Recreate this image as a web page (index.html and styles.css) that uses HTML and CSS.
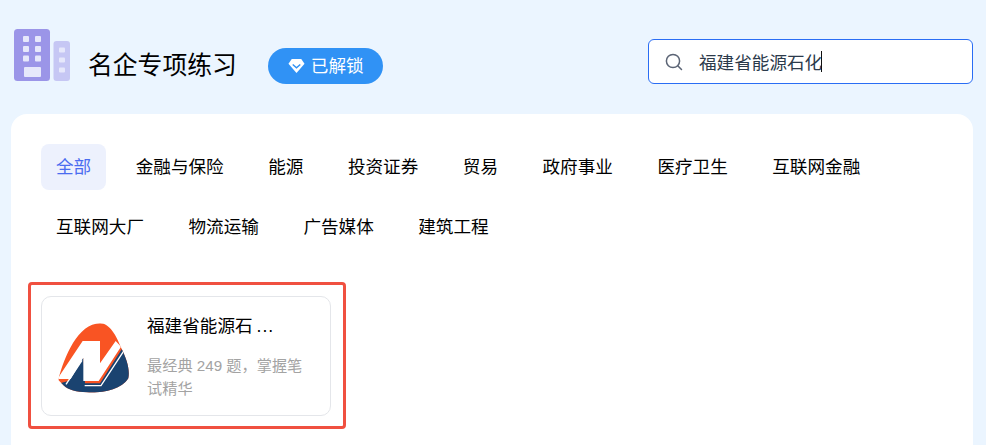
FILE: index.html
```html
<!DOCTYPE html>
<html lang="zh-CN">
<head>
<meta charset="utf-8">
<title>名企专项练习</title>
<link rel="stylesheet" href="styles.css">
</head>
<body>
<div class="page">
  <header class="header">
    <svg class="building" viewBox="0 0 56 52" aria-hidden="true">
      <rect x="0" y="0" width="36" height="52" rx="3.5" fill="#9b95e8"/>
      <rect x="39.500" y="12" width="16.500" height="40" rx="3" fill="#c6c7f4"/>
      <g fill="#e6e8fb">
        <rect x="9" y="7" width="6" height="6" rx="1"/><rect x="21" y="7" width="6" height="6" rx="1"/>
        <rect x="9" y="17" width="6" height="6" rx="1"/><rect x="21" y="17" width="6" height="6" rx="1"/>
        <rect x="9" y="26.500" width="6" height="6" rx="1"/><rect x="21" y="26.500" width="6" height="6" rx="1"/>
        <rect x="10" y="38" width="17" height="10" rx="1"/>
        <rect x="45" y="18.500" width="6" height="5" rx="1"/><rect x="45" y="28.500" width="6" height="5" rx="1"/><rect x="45" y="38.500" width="6" height="5" rx="1"/>
      </g>
    </svg>
    <h1 class="title">名企专项练习</h1>
    <div class="badge">
      <svg class="gem" viewBox="0 0 18 16" aria-hidden="true">
        <path d="M4 0.500H14L17.500 5.500L9 15.500L0.500 5.500Z" fill="#fff"/>
        <path d="M5 6.500L9 10L13 6.500" fill="none" stroke="#3092f5" stroke-width="1.500"/>
      </svg>
      <span class="badge-text">已解锁</span>
    </div>
    <div class="search">
      <svg class="search-icon" viewBox="0 0 18 18" aria-hidden="true">
        <circle cx="8" cy="8" r="6.600" fill="none" stroke="#5b6475" stroke-width="1.500"/>
        <path d="M13 13L16.500 16.500" stroke="#5b6475" stroke-width="1.500" stroke-linecap="round"/>
      </svg>
      <span class="search-text">福建省能源石化</span><span class="caret"></span>
    </div>
  </header>
  <main class="panel">
    <nav class="tabs">
      <a class="tab active">全部</a>
      <a class="tab">金融与保险</a>
      <a class="tab">能源</a>
      <a class="tab">投资证券</a>
      <a class="tab">贸易</a>
      <a class="tab">政府事业</a>
      <a class="tab">医疗卫生</a>
      <a class="tab">互联网金融</a>
      <a class="tab">互联网大厂</a>
      <a class="tab">物流运输</a>
      <a class="tab">广告媒体</a>
      <a class="tab">建筑工程</a>
    </nav>
    <div class="highlight">
      <article class="card">
        <svg class="logo" viewBox="0 0 270 240" aria-hidden="true">
          <defs>
            <clipPath id="blob"><path d="M25 195C42 125 85 25 150 25C180 25 200 65 212 95C232 135 240 165 235 190C215 225 150 236 110 232C80 230 55 225 42 212Z"/></clipPath>
          </defs>
          <g clip-path="url(#blob)">
            <rect width="270" height="240" fill="#f95423"/>
            <path d="M0 212L55 198L100 122L105 205H150L220 95L270 120V240H0Z" fill="#1a4370"/>
            <path d="M22 192L98 78H150L150 145L197 78L213 95L146 198H100V128L62 192Z" fill="#fff"/>
            <path d="M96 136L48 208" fill="none" stroke="#fff" stroke-width="4"/>
            <path d="M104 212H153L224 104" fill="none" stroke="#fff" stroke-width="4"/>
          </g>
        </svg>
        <div class="card-body">
          <h2 class="card-title">福建省能源石<span class="dots">...</span></h2>
          <p class="card-desc">最经典 249 题，掌握笔试精华</p>
        </div>
      </article>
    </div>
  </main>
</div>
</body>
</html>
```
FILE: styles.css
```css
* { box-sizing: border-box; }
html, body { margin: 0; padding: 0; height: 445px; overflow: hidden; }
body {
  background: #ebf5ff;
  font-family: "Liberation Sans", "Noto Sans CJK SC", sans-serif;
  color: #000;
}
.page { height: 445px; overflow: hidden; }
.header {
  display: flex;
  align-items: center;
  height: 114px;
  padding: 0 13px 0 14px;
}
.building { width: 56px; height: 52px; flex: none; margin-top: -4px; }
.title { margin: 18px 0 0 18px; font-size: 24.800px; font-weight: 400; line-height: 36px; }
.badge {
  display: flex;
  align-items: center;
  margin: 18px 0 0 31px;
  width: 115px;
  height: 36px;
  padding-left: 20px;
  gap: 6px;
  border-radius: 18px;
  background: #3092f5;
  color: #fff;
  font-size: 17.600px;
}
.badge-text { margin-bottom: 4px; }
.gem { width: 17px; height: 16px; }
.search {
  display: flex;
  align-items: center;
  margin-left: auto;
  margin-top: 9px;
  width: 325px;
  height: 45px;
  padding-left: 16px;
  background: #fff;
  border: 1px solid #2a6df4;
  border-radius: 6px;
}
.search-icon { width: 18px; height: 18px; flex: none; }
.search-text { margin-left: 16px; font-size: 17.600px; color: #2c3a4b; }
.caret { width: 1px; height: 21px; background: #111; margin-left: -1px; }
.panel {
  margin: 0 13px 0 11px;
  height: 340px;
  padding: 30px 30px 0;
  background: #fff;
  border-radius: 16px 16px 0 0;
}
.tabs { display: flex; flex-wrap: wrap; gap: 14px 14.500px; }
.tab {
  height: 46px;
  padding: 0 15px;
  border-radius: 8px;
  font-size: 17.600px;
  line-height: 46px;
  color: #000;
}
.tab.active { background: #edf1fd; color: #4a6cf0; }
.highlight {
  width: 318px;
  height: 147px;
  margin: 32px 0 0 -13px;
  padding: 11px 10px;
  border: 3px solid #f05040;
  border-radius: 4px;
}
.card {
  display: flex;
  width: 290px;
  height: 120px;
  border: 1px solid #e4e6ea;
  border-radius: 10px;
  background: #fff;
}
.logo { width: 90px; height: 80px; flex: none; margin: 18px 0 0 8px; }
.card-body { width: 170px; margin-left: 7px; padding-top: 15px; }
.card-title { margin: 0; font-size: 17.600px; font-weight: 400; line-height: 28px; }
.dots { margin-left: 4px; letter-spacing: 1px; }
.card-desc { margin: 14px 0 0; width: 160px; font-size: 15.200px; line-height: 23px; color: #a3a3a3; }
```
